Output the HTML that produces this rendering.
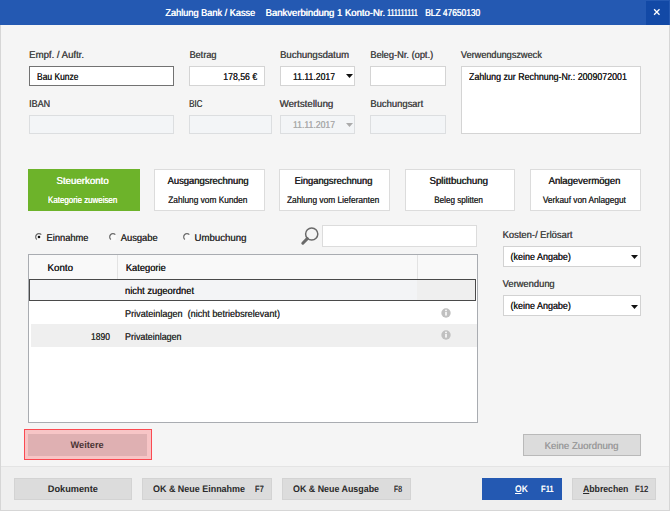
<!DOCTYPE html>
<html><head><meta charset="utf-8"><style>
html,body{margin:0;padding:0;}
body{width:670px;height:511px;position:relative;overflow:hidden;font-family:"Liberation Sans",sans-serif;text-rendering:geometricPrecision;background:#f5f5f5;}
.a{position:absolute;}
.t{position:absolute;white-space:nowrap;}
u{text-decoration-thickness:1px;text-underline-offset:1px;}
</style></head><body>
<div class="a" style="left:0px;top:0px;width:670px;height:511px;background:#f5f5f5;"></div>
<div class="a" style="left:0px;top:25px;width:1px;height:486px;background:#d6d6d6;"></div>
<div class="a" style="left:669px;top:25px;width:1px;height:486px;background:#d6d6d6;"></div>
<div class="a" style="left:0px;top:510px;width:670px;height:1px;background:#d6d6d6;"></div>
<div class="a" style="left:0px;top:0px;width:670px;height:25px;background:#2459b2;"></div>
<div class="a" style="left:646px;top:1px;width:23px;height:24px;background:#1249a6;"></div>
<div class="t" id="t0" style="left:165.20px;top:7.92px;font-size:9.199px;line-height:10.415px;color:#fff;transform:scale(1.0000,1.0871);transform-origin:0 7px;text-shadow:0.4px 0 0 #fff;">Zahlung Bank / Kasse</div>
<div class="t" id="t1" style="left:265.40px;top:9.00px;font-size:9.535px;line-height:10.241px;color:#fff;transform:scale(1.0000,1.0487);transform-origin:0 7px;text-shadow:0.4px 0 0 #fff;">Bankverbindung 1 Konto-Nr.</div>
<div class="t" id="t2" style="left:387.40px;top:7.82px;font-size:8.500px;line-height:10.777px;color:#fff;transform:scale(0.8160,1.1765);transform-origin:0 7px;text-shadow:0.4px 0 0 #fff;">111111111</div>
<div class="t" id="t3" style="left:424.70px;top:7.82px;font-size:8.500px;line-height:10.777px;color:#fff;transform:scale(0.9862,1.1765);transform-origin:0 7px;text-shadow:0.4px 0 0 #fff;">BLZ 47650130</div>
<svg class="a" style="left:650px;top:5px" width="14" height="14"><path d="M4.1 4.3 L9.5 9.7 M9.5 4.3 L4.1 9.7" stroke="#fff" stroke-width="1.3"/></svg>
<div class="t" id="t4" style="left:29.00px;top:51.00px;font-size:9.608px;line-height:10.203px;color:#484848;transform:scale(1.0000,1.0409);transform-origin:0 7px;text-shadow:0.25px 0 0 #484848;">Empf. / Auftr.</div>
<div class="t" id="t5" style="left:189.40px;top:49.91px;font-size:9.164px;line-height:10.433px;color:#484848;transform:scale(1.0000,1.0913);transform-origin:0 7px;text-shadow:0.25px 0 0 #484848;">Betrag</div>
<div class="t" id="t6" style="left:280.00px;top:51.00px;font-size:9.547px;line-height:10.235px;color:#484848;transform:scale(1.0000,1.0474);transform-origin:0 7px;text-shadow:0.25px 0 0 #484848;">Buchungsdatum</div>
<div class="t" id="t7" style="left:370.20px;top:49.93px;font-size:9.291px;line-height:10.367px;color:#484848;transform:scale(1.0000,1.0763);transform-origin:0 7px;text-shadow:0.25px 0 0 #484848;">Beleg-Nr. (opt.)</div>
<div class="t" id="t8" style="left:460.80px;top:49.92px;font-size:9.164px;line-height:10.433px;color:#484848;transform:scale(1.0000,1.0912);transform-origin:0 7px;text-shadow:0.25px 0 0 #484848;">Verwendungszweck</div>
<div class="t" id="t9" style="left:29.00px;top:98.91px;font-size:8.997px;line-height:10.519px;color:#484848;transform:scale(1.0000,1.1115);transform-origin:0 7px;text-shadow:0.25px 0 0 #484848;">IBAN</div>
<div class="t" id="t10" style="left:189.40px;top:98.82px;font-size:8.500px;line-height:10.777px;color:#484848;transform:scale(0.9457,1.1765);transform-origin:0 7px;text-shadow:0.25px 0 0 #484848;">BIC</div>
<div class="t" id="t11" style="left:279.50px;top:100.00px;font-size:9.694px;line-height:10.159px;color:#484848;transform:scale(1.0000,1.0316);transform-origin:0 7px;text-shadow:0.25px 0 0 #484848;">Wertstellung</div>
<div class="t" id="t12" style="left:370.20px;top:98.95px;font-size:9.439px;line-height:10.291px;color:#484848;transform:scale(1.0000,1.0594);transform-origin:0 7px;text-shadow:0.25px 0 0 #484848;">Buchungsart</div>
<div class="a" style="left:29px;top:66px;width:145px;height:20px;background:#fff;box-shadow:inset 0 0 0 1px #727272;"></div>
<div class="t" id="t13" style="left:37.00px;top:71.82px;font-size:8.500px;line-height:10.777px;color:#222;transform:scale(0.9955,1.1765);transform-origin:0 7px;text-shadow:0.1px 0 0 #222;">Bau Kunze</div>
<div class="a" style="left:189px;top:66px;width:76px;height:20px;background:#fff;box-shadow:inset 0 0 0 1px #d4d4d4;"></div>
<div class="t" id="t14" style="left:223.20px;top:71.85px;font-size:8.734px;line-height:10.656px;color:#222;transform:scale(1.0000,1.1449);transform-origin:0 7px;text-shadow:0.1px 0 0 #222;">178,56 €</div>
<div class="a" style="left:280px;top:66px;width:75px;height:20px;background:#fff;box-shadow:inset 0 0 0 1px #d4d4d4;"></div>
<div class="t" id="t15" style="left:292.90px;top:71.86px;font-size:8.689px;line-height:10.679px;color:#222;transform:scale(1.0000,1.1508);transform-origin:0 7px;text-shadow:0.1px 0 0 #222;">11.11.2017</div>
<svg class="a" style="left:345.5px;top:74.3px" width="8" height="5"><path d="M0 0 L7 0 L3.5 4 Z" fill="#111"/></svg>
<div class="a" style="left:370px;top:66px;width:76px;height:20px;background:#fff;box-shadow:inset 0 0 0 1px #d4d4d4;"></div>
<div class="a" style="left:461px;top:66px;width:180px;height:68px;background:#fff;box-shadow:inset 0 0 0 1px #d4d4d4;"></div>
<div class="t" id="t16" style="left:469.00px;top:71.89px;font-size:8.853px;line-height:10.594px;color:#222;transform:scale(1.0000,1.1295);transform-origin:0 7px;text-shadow:0.1px 0 0 #222;">Zahlung zur Rechnung-Nr.: 2009072001</div>
<div class="a" style="left:29px;top:115px;width:145px;height:19px;background:#f3f5f7;box-shadow:inset 0 0 0 1px #dcdee0;"></div>
<div class="a" style="left:189px;top:115px;width:83px;height:19px;background:#f3f5f7;box-shadow:inset 0 0 0 1px #dcdee0;"></div>
<div class="a" style="left:280px;top:115px;width:75px;height:19px;background:#f3f5f7;box-shadow:inset 0 0 0 1px #dcdee0;"></div>
<div class="t" id="t17" style="left:292.90px;top:119.86px;font-size:8.689px;line-height:10.679px;color:#ababab;transform:scale(1.0000,1.1508);transform-origin:0 7px;text-shadow:0.1px 0 0 #ababab;">11.11.2017</div>
<svg class="a" style="left:345.5px;top:123.3px" width="8" height="5"><path d="M0 0 L7 0 L3.5 4 Z" fill="#ababab"/></svg>
<div class="a" style="left:370px;top:115px;width:76px;height:19px;background:#f3f5f7;box-shadow:inset 0 0 0 1px #dcdee0;"></div>
<div class="a" style="left:28px;top:169px;width:112px;height:42px;background:#6db32a;"></div>
<div class="t" id="t18" style="left:56.30px;top:177.00px;font-size:9.680px;line-height:10.166px;color:#fff;transform:scale(1.0000,1.0331);transform-origin:0 7px;text-shadow:0.4px 0 0 #fff;">Steuerkonto</div>
<div class="t" id="t19" style="left:47.70px;top:194.82px;font-size:8.075px;line-height:10.997px;color:#fff;transform:scale(0.9833,1.1765);transform-origin:0 7px;text-shadow:0.1px 0 0 #fff;">Kategorie zuweisen</div>
<div class="a" style="left:154px;top:169px;width:111px;height:42px;background:#fff;box-shadow:inset 0 0 0 1px #dcdcdc;"></div>
<div class="t" id="t20" style="left:167.40px;top:175.94px;font-size:9.422px;line-height:10.299px;color:#222;transform:scale(1.0000,1.0613);transform-origin:0 7px;text-shadow:0.4px 0 0 #222;">Ausgangsrechnung</div>
<div class="t" id="t21" style="left:168.20px;top:194.87px;font-size:8.342px;line-height:10.859px;color:#333;transform:scale(1.0000,1.1389);transform-origin:0 7px;text-shadow:0.1px 0 0 #333;">Zahlung vom Kunden</div>
<div class="a" style="left:279px;top:169px;width:111px;height:42px;background:#fff;box-shadow:inset 0 0 0 1px #dcdcdc;"></div>
<div class="t" id="t22" style="left:294.40px;top:175.94px;font-size:9.340px;line-height:10.342px;color:#222;transform:scale(1.0000,1.0706);transform-origin:0 7px;text-shadow:0.4px 0 0 #222;">Eingangsrechnung</div>
<div class="t" id="t23" style="left:286.90px;top:194.87px;font-size:8.352px;line-height:10.854px;color:#333;transform:scale(1.0000,1.1374);transform-origin:0 7px;text-shadow:0.1px 0 0 #333;">Zahlung vom Lieferanten</div>
<div class="a" style="left:405px;top:169px;width:110px;height:42px;background:#fff;box-shadow:inset 0 0 0 1px #dcdcdc;"></div>
<div class="t" id="t24" style="left:429.30px;top:177.00px;font-size:9.670px;line-height:10.171px;color:#222;transform:scale(1.0000,1.0342);transform-origin:0 7px;text-shadow:0.4px 0 0 #222;">Splittbuchung</div>
<div class="t" id="t25" style="left:434.20px;top:196.00px;font-size:8.128px;line-height:10.970px;color:#333;transform:scale(1.0000,1.1688);transform-origin:0 7px;text-shadow:0.1px 0 0 #333;">Beleg splitten</div>
<div class="a" style="left:530px;top:169px;width:111px;height:42px;background:#fff;box-shadow:inset 0 0 0 1px #dcdcdc;"></div>
<div class="t" id="t26" style="left:548.40px;top:177.00px;font-size:9.510px;line-height:10.254px;color:#222;transform:scale(1.0000,1.0516);transform-origin:0 7px;text-shadow:0.4px 0 0 #222;">Anlagevermögen</div>
<div class="t" id="t27" style="left:542.80px;top:194.86px;font-size:8.313px;line-height:10.874px;color:#333;transform:scale(1.0000,1.1428);transform-origin:0 7px;text-shadow:0.1px 0 0 #333;">Verkauf von Anlagegut</div>
<svg class="a" style="left:33.5px;top:231.5px" width="10" height="10"><circle cx="5" cy="5" r="3.4" fill="#fbfbfb"/><path d="M7.33 2.67 A3.3 3.3 0 1 0 2.88 7.53" stroke="#6a6a6a" stroke-width="1.2" fill="none"/><circle cx="5" cy="5" r="1.3" fill="#111"/></svg>
<svg class="a" style="left:107.5px;top:231.5px" width="10" height="10"><circle cx="5" cy="5" r="3.4" fill="#fbfbfb"/><path d="M7.33 2.67 A3.3 3.3 0 1 0 2.88 7.53" stroke="#6a6a6a" stroke-width="1.2" fill="none"/></svg>
<svg class="a" style="left:181.5px;top:231.5px" width="10" height="10"><circle cx="5" cy="5" r="3.4" fill="#fbfbfb"/><path d="M7.33 2.67 A3.3 3.3 0 1 0 2.88 7.53" stroke="#6a6a6a" stroke-width="1.2" fill="none"/></svg>
<div class="t" id="t28" style="left:46.50px;top:232.94px;font-size:9.327px;line-height:10.349px;color:#333;transform:scale(1.0000,1.0722);transform-origin:0 7px;text-shadow:0.1px 0 0 #333;">Einnahme</div>
<div class="t" id="t29" style="left:120.70px;top:232.93px;font-size:9.372px;line-height:10.325px;color:#333;transform:scale(1.0000,1.0670);transform-origin:0 7px;text-shadow:0.1px 0 0 #333;">Ausgabe</div>
<div class="t" id="t30" style="left:194.50px;top:234.00px;font-size:9.643px;line-height:10.185px;color:#333;transform:scale(1.0000,1.0370);transform-origin:0 7px;text-shadow:0.1px 0 0 #333;">Umbuchung</div>
<svg class="a" style="left:298px;top:224px" width="24" height="24"><circle cx="13.7" cy="10" r="6.1" stroke="#6a6a6a" stroke-width="1.5" fill="none"/><path d="M9.3 14.6 L4.8 19.2" stroke="#6a6a6a" stroke-width="3" stroke-linecap="round"/></svg>
<div class="a" style="left:322px;top:225px;width:155px;height:22px;background:#fff;box-shadow:inset 0 0 0 1px #dcdcdc;"></div>
<div class="a" style="left:28px;top:254px;width:450px;height:169px;background:#fff;box-shadow:inset 0 0 0 1px #a9acb1;"></div>
<div class="a" style="left:29px;top:255px;width:448px;height:24px;background:#f9f9f9;"></div>
<div class="a" style="left:117px;top:255px;width:1px;height:24px;background:#e3e3e3;"></div>
<div class="a" style="left:417px;top:255px;width:1px;height:24px;background:#e3e3e3;"></div>
<div class="t" id="t31" style="left:47.50px;top:264.00px;font-size:9.758px;line-height:10.126px;color:#222;transform:scale(1.0000,1.0248);transform-origin:0 7px;text-shadow:0.1px 0 0 #222;">Konto</div>
<div class="t" id="t32" style="left:125.80px;top:262.94px;font-size:9.344px;line-height:10.340px;color:#222;transform:scale(1.0000,1.0702);transform-origin:0 7px;text-shadow:0.1px 0 0 #222;">Kategorie</div>
<div class="a" style="left:29px;top:279px;width:447px;height:22px;background:#f3f4f6;box-shadow:inset 0 0 0 1px #4a4a4a;"></div>
<div class="a" style="left:417px;top:280px;width:58px;height:20px;background:#efefef;"></div>
<div class="t" id="t33" style="left:125.00px;top:285.94px;font-size:9.332px;line-height:10.346px;color:#222;transform:scale(1.0000,1.0716);transform-origin:0 7px;text-shadow:0.1px 0 0 #222;">nicht zugeordnet</div>
<div class="t" id="t34" style="left:125.00px;top:308.91px;font-size:9.083px;line-height:10.475px;color:#333;transform:scale(1.0000,1.1010);transform-origin:0 7px;text-shadow:0.1px 0 0 #333;">Privateinlagen&nbsp;&nbsp;(nicht betriebsrelevant)</div>
<div class="a" style="left:31px;top:324px;width:446px;height:23px;background:#efefef;"></div>
<div class="t" id="t35" style="left:91.00px;top:331.83px;font-size:8.541px;line-height:10.756px;color:#333;transform:scale(1.0000,1.1709);transform-origin:100% 7px;text-shadow:0.1px 0 0 #333;">1890</div>
<div class="t" id="t36" style="left:125.00px;top:331.89px;font-size:8.915px;line-height:10.562px;color:#333;transform:scale(1.0000,1.1217);transform-origin:0 7px;text-shadow:0.1px 0 0 #333;">Privateinlagen</div>
<svg class="a" style="left:440.3px;top:306.6px" width="12" height="12"><circle cx="6" cy="6" r="4.7" fill="#c0c0c0"/><rect x="5.25" y="5" width="1.5" height="3.6" fill="#fff"/><circle cx="6" cy="3.4" r="0.85" fill="#fff"/></svg>
<svg class="a" style="left:440.3px;top:329.3px" width="12" height="12"><circle cx="6" cy="6" r="4.7" fill="#c0c0c0"/><rect x="5.25" y="5" width="1.5" height="3.6" fill="#fff"/><circle cx="6" cy="3.4" r="0.85" fill="#fff"/></svg>
<div class="a" style="left:24px;top:429px;width:128px;height:31px;background:#f7c5c6;box-shadow:inset 0 0 0 1px #fb4a52;"></div>
<div class="a" style="left:28px;top:434px;width:119px;height:22px;background:#dfb0b2;"></div>
<div class="t" id="t37" style="left:70.43px;top:441.00px;font-size:9.500px;line-height:10.259px;font-weight:bold;color:#4a3434;transform:scale(0.9664,1.0000);transform-origin:50% 7px;">Weitere</div>
<div class="t" id="t38" style="left:502.60px;top:229.94px;font-size:9.399px;line-height:10.311px;color:#484848;transform:scale(1.0000,1.0639);transform-origin:0 7px;text-shadow:0.25px 0 0 #484848;">Kosten-/ Erlösart</div>
<div class="a" style="left:503px;top:246px;width:138px;height:21px;background:#fff;box-shadow:inset 0 0 0 1px #d2d2d2;"></div>
<div class="t" id="t39" style="left:510.50px;top:251.90px;font-size:8.978px;line-height:10.529px;color:#222;transform:scale(1.0000,1.1138);transform-origin:0 7px;text-shadow:0.1px 0 0 #222;">(keine Angabe)</div>
<svg class="a" style="left:630.6px;top:255.4px" width="8" height="5"><path d="M0 0 L7 0 L3.5 4 Z" fill="#111"/></svg>
<div class="t" id="t40" style="left:502.60px;top:278.94px;font-size:9.352px;line-height:10.336px;color:#484848;transform:scale(1.0000,1.0693);transform-origin:0 7px;text-shadow:0.25px 0 0 #484848;">Verwendung</div>
<div class="a" style="left:503px;top:295px;width:138px;height:21px;background:#fff;box-shadow:inset 0 0 0 1px #d2d2d2;"></div>
<div class="t" id="t41" style="left:510.50px;top:300.90px;font-size:8.978px;line-height:10.529px;color:#222;transform:scale(1.0000,1.1138);transform-origin:0 7px;text-shadow:0.1px 0 0 #222;">(keine Angabe)</div>
<svg class="a" style="left:630.6px;top:304.6px" width="8" height="5"><path d="M0 0 L7 0 L3.5 4 Z" fill="#111"/></svg>
<div class="a" style="left:523px;top:434px;width:118px;height:22px;background:#dcdcdc;box-shadow:inset 0 0 0 1px #b9b9b9;"></div>
<div class="t" id="t42" style="left:544.60px;top:442.00px;font-size:9.645px;line-height:10.184px;color:#9c9c9c;transform:scale(1.0000,1.0368);transform-origin:50% 7px;text-shadow:0.1px 0 0 #9c9c9c;">Keine Zuordnung</div>
<div class="a" style="left:1px;top:466px;width:668px;height:44px;background:#efefef;"></div>
<div class="a" style="left:1px;top:466px;width:668px;height:1px;background:#e4e4e4;"></div>
<div class="a" style="left:14px;top:478px;width:118px;height:22px;background:#dcdcdc;box-shadow:inset 0 0 0 1px #d3d3d3;"></div>
<div class="t" id="t43" style="left:46.93px;top:485.00px;font-size:9.500px;line-height:10.259px;font-weight:bold;color:#2a2a2a;transform:scale(0.9665,1.0000);transform-origin:50% 7px;">Dokumente</div>
<div class="a" style="left:142px;top:478px;width:130px;height:22px;background:#dcdcdc;box-shadow:inset 0 0 0 1px #d3d3d3;"></div>
<div class="t" id="t44" style="left:152.50px;top:485.00px;font-size:9.500px;line-height:10.259px;font-weight:bold;color:#2a2a2a;transform:scale(0.9421,1.0000);transform-origin:0 7px;">OK &amp; Neue Einnahme</div>
<div class="t" id="t45" style="left:255.00px;top:483.82px;font-size:7.650px;line-height:11.217px;color:#333;transform:scale(0.9745,1.1765);transform-origin:0 7px;text-shadow:0.1px 0 0 #333;">F7</div>
<div class="a" style="left:282px;top:478px;width:129px;height:22px;background:#dcdcdc;box-shadow:inset 0 0 0 1px #d3d3d3;"></div>
<div class="t" id="t46" style="left:292.50px;top:485.00px;font-size:9.500px;line-height:10.259px;font-weight:bold;color:#2a2a2a;transform:scale(0.9345,1.0000);transform-origin:0 7px;">OK &amp; Neue Ausgabe</div>
<div class="t" id="t47" style="left:394.00px;top:483.82px;font-size:7.650px;line-height:11.217px;color:#333;transform:scale(0.8961,1.1765);transform-origin:0 7px;text-shadow:0.1px 0 0 #333;">F8</div>
<div class="a" style="left:482px;top:478px;width:80px;height:22px;background:#2459b2;box-shadow:inset 0 0 0 1px #2459b2;"></div>
<div class="t" id="t48" style="left:515.40px;top:485.00px;font-size:9.500px;line-height:10.259px;font-weight:bold;color:#fff;transform:scale(0.8982,1.0000);transform-origin:0 7px;"><u>O</u>K</div>
<div class="t" id="t49" style="left:541.00px;top:483.82px;font-size:7.650px;line-height:11.217px;color:#fff;transform:scale(0.9988,1.1765);transform-origin:0 7px;text-shadow:0.1px 0 0 #fff;">F11</div>
<div class="a" style="left:572px;top:478px;width:84px;height:22px;background:#dcdcdc;box-shadow:inset 0 0 0 1px #d3d3d3;"></div>
<div class="t" id="t50" style="left:582.80px;top:485.00px;font-size:9.500px;line-height:10.259px;font-weight:bold;color:#2a2a2a;transform:scale(0.9149,1.0000);transform-origin:0 7px;"><u>A</u>bbrechen</div>
<div class="t" id="t51" style="left:635.00px;top:483.83px;font-size:7.660px;line-height:11.212px;color:#333;transform:scale(1.0000,1.1749);transform-origin:0 7px;text-shadow:0.1px 0 0 #333;">F12</div>
</body></html>
